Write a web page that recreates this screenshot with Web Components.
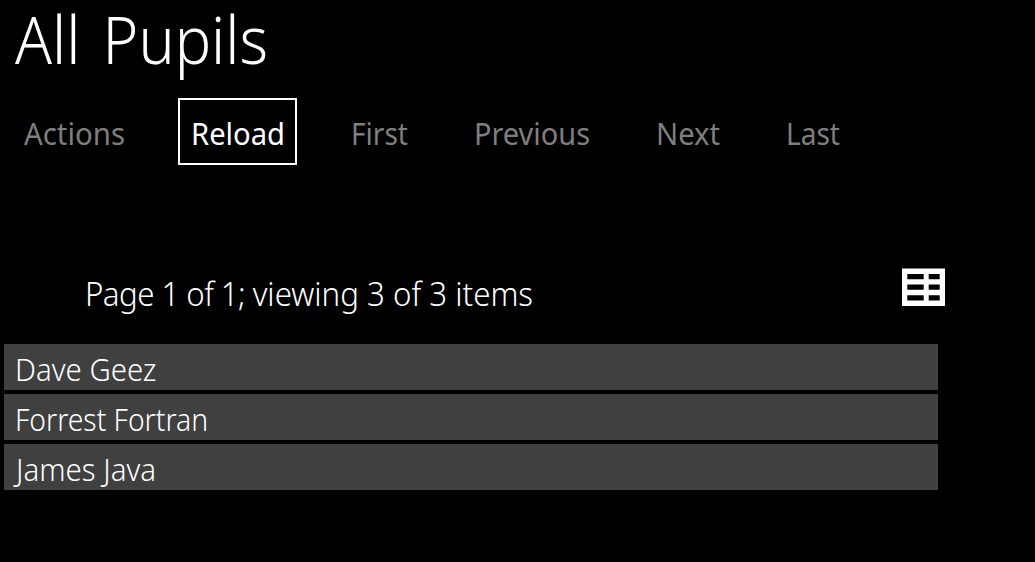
<!DOCTYPE html>
<html lang="en">
<head>
<meta charset="utf-8">
<title>All Pupils</title>
<style>
html, body { margin: 0; height: 100%; background: #000; overflow: hidden; }
</style>
</head>
<body>
<pupils-page></pupils-page>
<script>
// A line of text condensed to the width given in its "width" attribute.
class FitText extends HTMLElement {
  connectedCallback() {
    const root = this.attachShadow({ mode: 'open' });
    root.innerHTML = `<style>
      :host { display: block; flex: none; white-space: nowrap; }
      span { display: inline-block; vertical-align: top; transform-origin: 0 0; }
    </style><span><slot></slot></span>`;
    const span = root.querySelector('span');
    const target = Number(this.getAttribute('width'));
    this.style.width = target + 'px';
    span.style.transform = `scaleX(${target / span.getBoundingClientRect().width})`;
  }
}

class NavAction extends HTMLElement {
  constructor() {
    super();
    this.attachShadow({ mode: 'open' }).innerHTML = `<style>
      :host { display: flex; box-sizing: border-box; height: 67px; padding: 11px 10px 0; border: 2px solid transparent;
        color: #7f7f7f; font: 380 31px/44px "Noto Sans", sans-serif; }
      :host([active]) { padding: 11px 10px 0 11px; color: #fff; border-color: #fff; }
    </style><slot></slot>`;
  }
}

class GridIcon extends HTMLElement {
  constructor() {
    super();
    this.attachShadow({ mode: 'open' }).innerHTML = `<style>
      :host { display: block; width: 43px; height: 38px; } svg { display: block; }
    </style>
    <svg width="43" height="38" viewBox="0 0 43 38">
      <rect y=".5" width="43" height="37.5" fill="#fff"/>
      <path fill="#000" d="M5.3 6h16.4v5.2H5.3zM26.7 6h11v5.2h-11zM5.3 16.6h16.4v5.2H5.3zM26.7 16.6h11v5.2h-11zM5.3 27.3h16.4v5.2H5.3zM26.7 27.3h11v5.2h-11z"/>
    </svg>`;
  }
}

class PupilRow extends HTMLElement {
  constructor() {
    super();
    this.attachShadow({ mode: 'open' }).innerHTML = `<style>
      :host { display: flex; box-sizing: border-box; height: 46px; padding: 3px 0 0 11px; background: #404040;
        color: #fff; font: 330 31px/44px "Noto Sans", sans-serif; }
    </style><slot></slot>`;
  }
}

class PupilsPage extends HTMLElement {
  constructor() {
    super();
    this.attachShadow({ mode: 'open' }).innerHTML = `<style>
      :host { display: block; color: #fff; }
      h1 { margin: 0; padding-left: 15px; height: 98px; font: 330 67px/76px "Noto Sans", sans-serif; word-spacing: 7px; }
      nav { display: flex; padding-left: 12px; }
      .summary { display: flex; justify-content: space-between; align-items: flex-start; box-sizing: border-box;
        width: 945px; height: 76px; margin-top: 103px; padding-left: 84.5px; }
      .summary fit-text { padding-top: 3px; font: 330 33px/46px "Noto Sans", sans-serif; }
      .page { letter-spacing: -.6px; }
      .list { display: flex; flex-direction: column; gap: 4px; width: 934px; margin-left: 4px; }
    </style>
    <h1><fit-text width="253">All Pupils</fit-text></h1>
    <nav>
      <nav-action><fit-text width="101">Actions</fit-text></nav-action>
      <nav-action active style="margin-left:41px"><fit-text width="94">Reload</fit-text></nav-action>
      <nav-action style="margin-left:42px"><fit-text width="57">First</fit-text></nav-action>
      <nav-action style="margin-left:42px"><fit-text width="116">Previous</fit-text></nav-action>
      <nav-action style="margin-left:42px"><fit-text width="64">Next</fit-text></nav-action>
      <nav-action style="margin-left:42px"><fit-text width="54">Last</fit-text></nav-action>
    </nav>
    <div class="summary">
      <fit-text width="448"><span class="page">Page 1 of 1; </span>viewing 3 of 3 items</fit-text>
      <grid-icon></grid-icon>
    </div>
    <div class="list">
      <pupil-row><fit-text width="141.5">Dave Geez</fit-text></pupil-row>
      <pupil-row><fit-text width="193">Forrest Fortran</fit-text></pupil-row>
      <pupil-row style="padding-left:12px"><fit-text width="140">James Java</fit-text></pupil-row>
    </div>`;
  }
}

customElements.define('nav-action', NavAction);
customElements.define('grid-icon', GridIcon);
customElements.define('pupil-row', PupilRow);
customElements.define('pupils-page', PupilsPage);
customElements.define('fit-text', FitText);
</script>
</body>
</html>
